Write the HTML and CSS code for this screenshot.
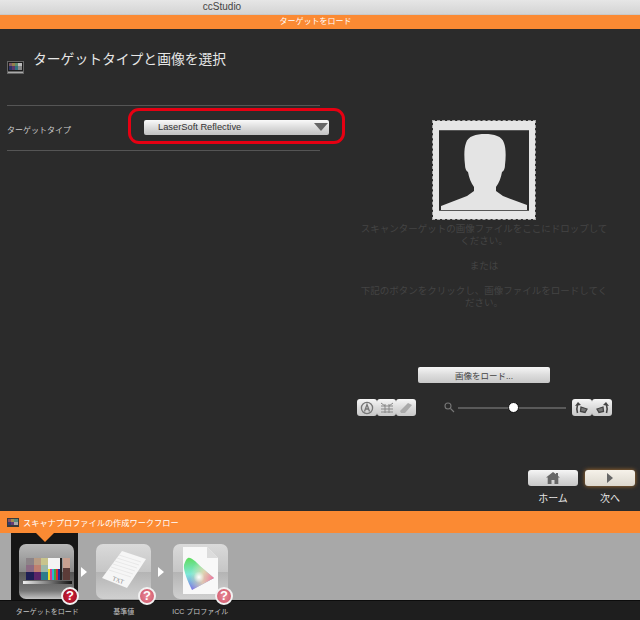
FILE: index.html
```html
<!DOCTYPE html>
<html>
<head>
    <title>ccStudio</title>
    <link rel="stylesheet" href="styles.css">
</head>
<body>
    <div class="titlebar">ccStudio</div>
    <div class="header">ターゲットをロード</div>

    <div class="main">
        <div class="left">
            <div class="title-row">
                <svg class="title-icon" width="17" height="13" viewBox="0 0 17 13">
                    <rect width="17" height="13" fill="#666"/>
                    <rect x="1" y="1" width="15" height="9" fill="#1c1c1c"/>
                    <rect x="2" y="2" width="3" height="3" fill="#7d5a66"/>
                    <rect x="5" y="2" width="3" height="3" fill="#94804a"/>
                    <rect x="8" y="2" width="3" height="3" fill="#5f8a6a"/>
                    <rect x="11" y="2" width="4" height="3" fill="#bbb"/>
                    <rect x="2" y="5" width="3" height="4" fill="#2e3566"/>
                    <rect x="5" y="5" width="3" height="4" fill="#5c3a6a"/>
                    <rect x="8" y="5" width="3" height="4" fill="#32707f"/>
                    <rect x="11" y="5" width="4" height="4" fill="#888"/>
                    <rect x="1" y="11" width="15" height="1" fill="#aaa"/>
                </svg>
                <h1>ターゲットタイプと画像を選択</h1>
            </div>
            <div class="type-row">
                <span class="type-label">ターゲットタイプ</span>
                <div class="select">
                    <span>LaserSoft Reflective</span>
                    <i class="select-arrow"></i>
                </div>
                <div class="highlight"></div>
            </div>
        </div>

        <div class="right">
            <div class="drop-photo">
                <div class="drop-inner">
                    <svg width="90" height="79" viewBox="0 0 90 79">
                        <path fill="#e4e4e4" d="M2 79V75L28 65L35 60V56C32 52 30 47 29 41C27 40 26 37 26 34C25 26 25 17 27 12C29 5 37 3 46 3C55 3 63 5 65 12C67 17 67 26 66 34C66 37 65 40 63 41C62 47 60 52 57 56V60L64 65L88 74V79Z"/>
                    </svg>
                </div>
            </div>
            <div class="drop-text">
                <p>スキャンターゲットの画像ファイルをここにドロップしてください。</p>
                <p>または</p>
                <p>下記のボタンをクリックし、画像ファイルをロードしてください。</p>
            </div>
            <button class="load-btn">画像をロード...</button>
            <div class="tools">
                <div class="btn-group">
                    <button class="tool-btn">
                        <svg width="14" height="14" viewBox="0 0 14 14" fill="none" stroke="#777" stroke-width="1.3">
                            <circle cx="7" cy="7" r="5.6"/>
                            <path d="M4.5 10.5L7 3.5L9.5 10.5M5.4 8H8.6"/>
                        </svg>
                    </button>
                    <button class="tool-btn">
                        <svg width="14" height="12" viewBox="0 0 14 12" fill="none" stroke="#888" stroke-width="1">
                            <path d="M1 1L5 4M13 1L9 4M1 4H13M1 7H13M1 10H13M5 2V11M9 2V11"/>
                        </svg>
                    </button>
                    <button class="tool-btn">
                        <svg width="14" height="12" viewBox="0 0 14 12">
                            <path fill="#aaa" d="M1 9L9 1L13 3L6 11H2Z"/>
                        </svg>
                    </button>
                </div>
                <div class="slider">
                    <svg class="zoom-glass" width="11" height="11" viewBox="0 0 11 11" fill="none" stroke="#777" stroke-width="1.1">
                        <circle cx="4" cy="4" r="3"/>
                        <path d="M6.5 6.5L10 10"/>
                    </svg>
                    <div class="slider-track"><div class="slider-knob"></div></div>
                </div>
                <div class="btn-group">
                    <button class="tool-btn rot">
                        <svg width="14" height="12" viewBox="0 0 14 12" fill="none" stroke="#444" stroke-width="1.6">
                            <path d="M2.5 11C1.5 8 1.5 6 2.5 3"/>
                            <path fill="#444" stroke="none" d="M0 4L3 0L6 3Z"/>
                            <path fill="#777" stroke-width="1.3" d="M6 5L12 7L10 10.5L5.5 9.5Z"/>
                        </svg>
                    </button>
                    <button class="tool-btn rot">
                        <svg width="14" height="12" viewBox="0 0 14 12" fill="none" stroke="#444" stroke-width="1.6">
                            <path d="M11.5 11C12.5 8 12.5 6 11.5 3"/>
                            <path fill="#444" stroke="none" d="M14 4L11 0L8 3Z"/>
                            <path fill="#777" stroke-width="1.3" d="M8 5L2 7L4 10.5L8.5 9.5Z"/>
                        </svg>
                    </button>
                </div>
            </div>
            <div class="nav">
                <div class="nav-item">
                    <button class="nav-btn">
                        <svg width="14" height="12" viewBox="0 0 14 12">
                            <path fill="#666" d="M7 0L10 2.3V1H12V3.9L14 5.5H12.3V12H8.5V8H5.5V12H1.7V5.5H0Z"/>
                        </svg>
                    </button>
                    <span>ホーム</span>
                </div>
                <div class="nav-item">
                    <button class="nav-btn next">
                        <svg width="6" height="10" viewBox="0 0 6 10"><path fill="#666" d="M0 0L6 5L0 10Z"/></svg>
                    </button>
                    <span>次へ</span>
                </div>
            </div>
        </div>
    </div>

    <div class="flow-bar">
        <svg width="12" height="9" viewBox="0 0 12 9">
            <rect width="12" height="9" fill="#3a3a3a"/>
            <rect x="1" y="1" width="3" height="3" fill="#8a5062"/>
            <rect x="4" y="1" width="3" height="3" fill="#a08c50"/>
            <rect x="7" y="1" width="4" height="3" fill="#5c8c80"/>
            <rect x="1" y="4" width="3" height="3" fill="#343c74"/>
            <rect x="4" y="4" width="3" height="3" fill="#663c74"/>
            <rect x="7" y="4" width="4" height="3" fill="#aaa"/>
        </svg>
        <span>スキャナプロファイルの作成ワークフロー</span>
    </div>

    <div class="flow">
        <div class="step active">
            <div class="step-icon">
                <svg width="55" height="55" viewBox="0 0 55 55">
                    <defs>
                        <linearGradient id="strip">
                            <stop offset="0" stop-color="#eee"/>
                            <stop offset="1" stop-color="#111"/>
                        </linearGradient>
                    </defs>
                    <rect x="7" y="14" width="8" height="7" fill="#8c8488"/>
                    <rect x="15" y="14" width="7" height="7" fill="#b89c84"/>
                    <rect x="22" y="14" width="7" height="7" fill="#c8c48c"/>
                    <rect x="7" y="21" width="8" height="7" fill="#8c6c84"/>
                    <rect x="15" y="21" width="7" height="7" fill="#c08070"/>
                    <rect x="22" y="21" width="7" height="7" fill="#9cb8a8"/>
                    <rect x="7" y="28" width="8" height="8" fill="#1e1e54"/>
                    <rect x="15" y="28" width="7" height="8" fill="#5a2468"/>
                    <rect x="22" y="28" width="7" height="8" fill="#2c7c8c"/>
                    <rect x="29" y="14" width="12" height="11" fill="#f4f4f4"/>
                    <rect x="29" y="25" width="2" height="11" fill="#eadc30"/>
                    <rect x="31" y="25" width="2" height="11" fill="#d83890"/>
                    <rect x="33" y="25" width="2" height="11" fill="#30b0d8"/>
                    <rect x="35" y="25" width="2" height="11" fill="#38a848"/>
                    <rect x="37" y="25" width="2" height="11" fill="#d82c30"/>
                    <rect x="39" y="25" width="2" height="11" fill="#2030a0"/>
                    <rect x="41" y="14" width="2" height="22" fill="#222"/>
                    <rect x="44" y="14" width="7" height="10" fill="#c8a090"/>
                    <rect x="44" y="24" width="7" height="12" fill="#5c3c38"/>
                    <rect x="4" y="37" width="49" height="3" fill="url(#strip)"/>
                </svg>
            </div>
            <div class="badge">?</div>
        </div>
        <i class="flow-arrow"></i>
        <div class="step">
            <div class="step-icon">
                <svg width="55" height="55" viewBox="0 0 55 55">
                    <path fill="#f6f6f6" d="M26 7L50 15L31 44L6 34Z"/>
                    <path fill="none" stroke="#e2e2e2" stroke-width="0.7" d="M23 11L45 18M21 14L43 21M19 17L41 24M17 20L39 27M15 23L37 30M13 26L35 33"/>
                    <text class="txt-label" transform="translate(16 36) rotate(20)">TXT</text>
                </svg>
            </div>
            <div class="badge dim">?</div>
        </div>
        <i class="flow-arrow"></i>
        <div class="step">
            <div class="step-icon">
                <svg width="55" height="55" viewBox="0 0 55 55">
                    <defs>
                        <linearGradient id="gamut" x1="0.2" y1="0" x2="0.3" y2="1">
                            <stop offset="0" stop-color="#5fdc5f"/>
                            <stop offset="0.5" stop-color="#7fe8d8"/>
                            <stop offset="1" stop-color="#7a70e8"/>
                        </linearGradient>
                        <radialGradient id="gamut-r" cx="1" cy="0.65" r="0.8">
                            <stop offset="0" stop-color="#f0709a"/>
                            <stop offset="0.5" stop-color="#f4d0a8" stop-opacity="0.8"/>
                            <stop offset="1" stop-color="#f4f0a8" stop-opacity="0"/>
                        </radialGradient>
                        <radialGradient id="gamut-w" cx="0.5" cy="0.6" r="0.18">
                            <stop offset="0" stop-color="#fff"/>
                            <stop offset="1" stop-color="#fff" stop-opacity="0"/>
                        </radialGradient>
                    </defs>
                    <path fill="#f8f8f8" d="M10 3H34L45 14V50H10Z"/>
                    <path fill="#dcdcdc" d="M34 3V14H45Z"/>
                    <path fill="url(#gamut)" d="M15 14C18 13 22 17 27 22L41 34L19 46C15 38 10 26 11 21C12 18 13 15 15 14Z"/>
                    <path fill="url(#gamut-r)" d="M15 14C18 13 22 17 27 22L41 34L19 46C15 38 10 26 11 21C12 18 13 15 15 14Z"/>
                    <path fill="url(#gamut-w)" d="M15 14C18 13 22 17 27 22L41 34L19 46C15 38 10 26 11 21C12 18 13 15 15 14Z"/>
                </svg>
            </div>
            <div class="badge dim">?</div>
        </div>
    </div>

    <div class="flow-labels">
        <span>ターゲットをロード</span>
        <span>基準値</span>
        <span>ICC プロファイル</span>
    </div>
</body>
</html>
```

FILE: styles.css
```css
* {
    box-sizing: border-box;
}
html, body {
    margin: 0;
    height: 620px;
    overflow: hidden;
}
body {
    font-family: "Liberation Sans", "Noto Sans CJK JP", sans-serif;
    background-color: #2b2b2b;
    color: #ddd;
    display: flex;
    flex-direction: column;
}
button {
    font-family: inherit;
    border: none;
    padding: 0;
    background: linear-gradient(#f6f6f6, #dcdcdc 50%, #c8c8c8);
    color: #444;
    display: flex;
    align-items: center;
    justify-content: center;
}

.titlebar {
    height: 14px;
    background: linear-gradient(#e6e6e6, #d4d4d4);
    color: #444;
    font-size: 10px;
    line-height: 14px;
    text-align: center;
    padding-right: 196px;
}
.header {
    height: 15px;
    background-color: #fb8a33;
    border-top: 1px solid #c9c9c9;
    color: #fff;
    font-size: 8px;
    line-height: 14px;
    text-align: center;
    padding-right: 9px;
}

.main {
    height: 482px;
    display: flex;
}
.left {
    width: 350px;
    padding: 21px 30px 0 7px;
}
.title-row {
    display: flex;
    align-items: flex-start;
    height: 55px;
}
.title-icon {
    flex: none;
    margin-top: 11px;
}
h1 {
    margin: 0 0 0 9px;
    font-size: 13.8px;
    font-weight: normal;
    line-height: 20px;
    color: #e6e6e6;
}
.type-row {
    position: relative;
    height: 46px;
    border-top: 1px solid #555;
    border-bottom: 1px solid #555;
    display: flex;
    align-items: center;
}
.type-label {
    flex: none;
    width: 137px;
    margin-top: 2px;
    font-size: 8px;
    color: #ccc;
}
.select {
    flex: none;
    width: 185px;
    height: 15px;
    border-radius: 2px;
    background: linear-gradient(#fafafa, #dcdcdc 50%, #c2c2c2);
    color: #333;
    font-size: 9.3px;
    line-height: 15px;
    padding-left: 14px;
    display: flex;
    align-items: center;
    justify-content: space-between;
    margin-top: -2px;
}
.select-arrow {
    width: 0;
    height: 0;
    margin-right: 1px;
    border-left: 7px solid transparent;
    border-right: 7px solid transparent;
    border-top: 8px solid #666;
}
.highlight {
    position: absolute;
    left: 121px;
    top: 2px;
    width: 217px;
    height: 36px;
    border: 3px solid #e60012;
    border-radius: 11px;
}

.right {
    flex: 1;
    display: flex;
    flex-direction: column;
    align-items: stretch;
    padding-top: 91px;
}
.drop-photo {
    width: 104px;
    height: 100px;
    margin-left: 82px;
    background-color: #e6e6e6;
    background-clip: padding-box;
    border: 1px dashed #a8a8a8;
    padding: 9px 6px;
}
.drop-inner {
    width: 90px;
    height: 81px;
    background-color: #2b2b2b;
    border-top: 1px solid #555;
    border-bottom: 1px solid #555;
}
.drop-inner svg {
    display: block;
}
.drop-text {
    width: 250px;
    margin: 3px 0 0 9px;
    font-size: 9.5px;
    line-height: 12px;
    color: #444;
    text-align: center;
}
.drop-text p {
    margin: 0 0 13px;
}
.load-btn {
    width: 132px;
    height: 16px;
    margin: 45px 0 0 68px;
    border-radius: 2px;
    font-size: 8.5px;
}
.tools {
    display: flex;
    align-items: center;
    margin-top: 16px;
    margin-left: 7px;
    height: 17px;
}
.btn-group {
    display: flex;
}
.tool-btn {
    width: 19.7px;
    height: 17px;
    border-radius: 3px;
}
.tool-btn.rot {
    width: 20px;
}
.slider {
    width: 156px;
    display: flex;
    align-items: center;
    padding-left: 28px;
}
.zoom-glass {
    flex: none;
}
.slider-track {
    position: relative;
    width: 108px;
    height: 2px;
    margin-left: 3px;
    background-color: #5a5a5a;
}
.slider-knob {
    position: absolute;
    left: 50px;
    top: -5px;
    width: 11px;
    height: 11px;
    border-radius: 50%;
    background-color: #fff;
    border: 1px solid #111;
}
.nav {
    display: flex;
    gap: 7px;
    margin: 54px 0 0 178px;
}
.nav-item {
    width: 50px;
    display: flex;
    flex-direction: column;
    align-items: center;
    font-size: 10px;
    line-height: 14px;
    color: #e6e6e6;
    gap: 6px;
}
.nav-btn {
    flex: none;
    width: 50px;
    height: 16px;
    border-radius: 3px;
}
.nav-btn.next {
    background: linear-gradient(#f6f2ea, #ddd8ce);
    box-shadow: 0 0 4px #b5762f;
}

.flow-bar {
    height: 22px;
    background-color: #fb8a33;
    color: #fff;
    font-size: 8.2px;
    display: flex;
    align-items: center;
    gap: 4px;
    padding-left: 7px;
}
.flow {
    height: 67px;
    background-color: #a8a8a8;
    display: flex;
    align-items: flex-start;
    padding-left: 11px;
}
.step {
    position: relative;
    width: 55px;
    height: 67px;
    padding-top: 11px;
    margin: 0 7px 0 9px;
}
.step.active {
    width: 67px;
    padding-left: 8px;
    margin: 0 3px 0 0;
    background-color: #161616;
}
.step.active::before {
    content: "";
    position: absolute;
    left: 25px;
    top: 0;
    border-left: 9px solid transparent;
    border-right: 9px solid transparent;
    border-top: 9px solid #fb8a33;
}
.step-icon {
    width: 55px;
    height: 55px;
    border-radius: 7px;
    background: linear-gradient(#dadada, #c6c6c6 50%, #b4b4b4 51%, #d0d0d0);
    overflow: hidden;
}
.step.active .step-icon {
    background: linear-gradient(#b8b8b8, #8a8a8a 50%, #555 51%, #777 85%, #c4c4c4);
}
.step-icon svg {
    display: block;
}
.badge {
    position: absolute;
    left: 42px;
    top: 54px;
    width: 18px;
    height: 18px;
    border-radius: 50%;
    background: radial-gradient(#d81e3a, #8f0f20);
    border: 2px solid #f2f2f2;
    color: #fff;
    font-size: 13px;
    font-weight: bold;
    line-height: 14px;
    text-align: center;
}
.step.active .badge {
    left: 50px;
}
.badge.dim {
    background: radial-gradient(#e88a98, #cf5468);
}
.flow-arrow {
    flex: none;
    margin-top: 34px;
    width: 0;
    height: 0;
    border-top: 5px solid transparent;
    border-bottom: 5px solid transparent;
    border-left: 6px solid #fff;
}
.txt-label {
    font-family: "Liberation Serif", serif;
    font-size: 6px;
    fill: #888;
}
.flow-labels {
    height: 20px;
    background-color: #1e1e1e;
    border-top: 1px solid #0c0c0c;
    color: #c4c4c4;
    font-size: 7px;
    line-height: 22px;
    padding-left: 9px;
    display: grid;
    grid-template-columns: 76.5px 76.5px 76.5px;
}
.flow-labels span {
    text-align: center;
}
```
